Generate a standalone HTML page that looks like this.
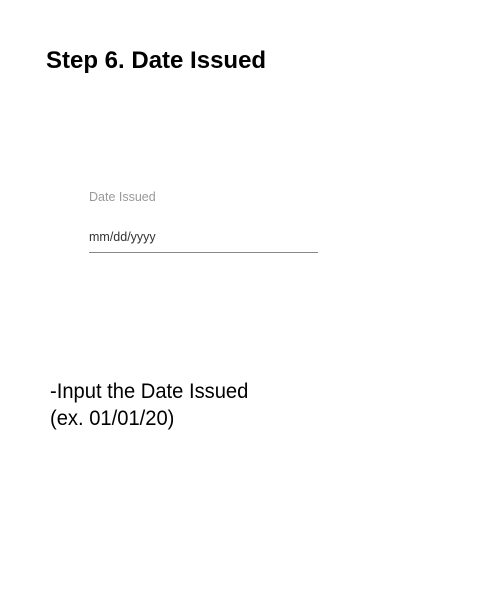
<!DOCTYPE html>
<html><head><style>
body{margin:0;width:500px;height:602px;background:#fff;position:relative;font-family:"Liberation Sans",sans-serif;overflow:hidden}
.a{position:absolute;white-space:nowrap}
</style></head><body>
<div class="a" style="left:46px;top:47px;font-size:24px;font-weight:bold;color:#000">Step 6. Date Issued</div>
<div class="a" style="left:89px;top:190px;font-size:12.5px;color:#999">Date Issued</div>
<div class="a" style="left:89px;top:230px;font-size:12.5px;color:#333">mm/dd/yyyy</div>
<div class="a" style="left:89px;top:252px;width:229px;height:1px;background:#888"></div>
<div class="a" style="left:50px;top:378px;font-size:21px;color:#000;line-height:27px;transform:scaleX(0.96);transform-origin:left">-Input the Date Issued<br>(ex. 01/01/20)</div>
</body></html>
